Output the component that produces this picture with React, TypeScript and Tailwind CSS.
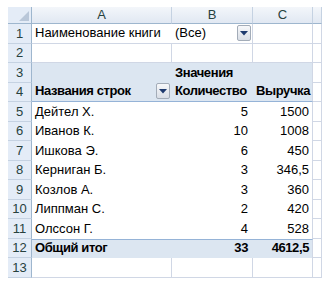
import React from "react";

const heights = [20, 19, 20, 19, 20, 19, 20, 19, 20, 19, 20, 19, 20];

const Drop = () => (
  <div className="w-[14px] h-[16px] rounded-[2px] border border-[#a3acb8] bg-gradient-to-b from-[#f7f8fa] to-[#d9dee6] flex items-center justify-center shrink-0">
    <svg width="8" height="5" viewBox="0 0 8 5">
      <path d="M0 0 H8 L4 4.5 Z" fill="#1e3a6e" />
    </svg>
  </div>
);

type Row = {
  a?: React.ReactNode;
  b?: React.ReactNode;
  c?: React.ReactNode;
  kind: "sheet" | "filter" | "head" | "data" | "total";
};

const rows: Row[] = [
  { kind: "filter" },
  { kind: "sheet" },
  { kind: "head" },
  { kind: "head" },
  { kind: "data", a: "Дейтел Х.", b: "5", c: "1500" },
  { kind: "data", a: "Иванов К.", b: "10", c: "1008" },
  { kind: "data", a: "Ишкова Э.", b: "6", c: "450" },
  { kind: "data", a: "Керниган Б.", b: "3", c: "346,5" },
  { kind: "data", a: "Козлов А.", b: "3", c: "360" },
  { kind: "data", a: "Липпман С.", b: "2", c: "420" },
  { kind: "data", a: "Олссон Г.", b: "4", c: "528" },
  { kind: "total", a: "Общий итог", b: "33", c: "4612,5" },
  { kind: "sheet" },
];

export default function App() {
  return (
    <div
      className="w-[330px] h-[292px] bg-white pl-[8px] pt-[7px] text-[13px] text-black overflow-hidden"
      style={{ fontFamily: '"Liberation Sans", Arial, sans-serif' }}
    >
      <div className="flex h-[17px]">
        <div className="w-[24px] h-full bg-[#e4ecf7] border-r border-b border-[#9eb6ce] relative">
          <svg className="absolute right-[2px] bottom-[2px]" width="10" height="10" viewBox="0 0 10 10">
            <path d="M10 0 V10 H0 Z" fill="#b9c7d9" />
          </svg>
        </div>
        <div className="w-[140px] h-full bg-gradient-to-b from-[#f3f6fa] to-[#e1e8f2] border-r border-r-[#c5d2e2] border-b border-b-[#9eb6ce] flex items-center justify-center text-[#27413e]">A</div>
        <div className="w-[81px] h-full bg-gradient-to-b from-[#f3f6fa] to-[#e1e8f2] border-r border-r-[#c5d2e2] border-b border-b-[#9eb6ce] flex items-center justify-center text-[#27413e]">B</div>
        <div className="w-[60px] h-full bg-gradient-to-b from-[#f3f6fa] to-[#e1e8f2] border-r border-r-[#c5d2e2] border-b border-b-[#9eb6ce] flex items-center justify-center text-[#27413e]">C</div>
        <div className="w-[9px] h-full bg-gradient-to-b from-[#f3f6fa] to-[#e1e8f2] border-r border-r-[#c5d2e2] border-b border-b-[#9eb6ce]" />
      </div>
      {rows.map((r, i) => {
        const h = heights[i];
        const n = i + 1;
        const blue = r.kind === "head" || r.kind === "total";
        const pivotNoGrid = r.kind === "head" || r.kind === "data" || r.kind === "total";
        const bottomBlue = n === 4;
        const topBlue = r.kind === "total";
        const boldRow = r.kind === "total" || n === 4;
        const cellBase = `h-full flex items-end pb-[1px] ${blue ? "bg-[#dce6f1]" : "bg-white"} ${boldRow ? "font-bold tracking-[-0.4px]" : ""}`;
        const bb = bottomBlue
          ? "border-b border-[#95b3d7]"
          : topBlue
          ? "border-t border-[#95b3d7]"
          : pivotNoGrid
          ? ""
          : "border-b border-[#d0d7e5]";
        return (
          <div key={i} className="flex" style={{ height: h }}>
            <div className="w-[24px] h-full bg-[#e4ecf7] border-r border-b border-r-[#9eb6ce] border-b-[#c5d2e2] flex items-center justify-center text-[#27413e]">
              {n}
            </div>
            <div className={`w-[140px] ${cellBase} ${bb} ${pivotNoGrid || r.kind === "filter" ? "" : "border-r border-r-[#d0d7e5]"} pl-[3px] pr-[2px] justify-between`}>
              {r.kind === "filter" ? (
                <span>Наименование книги</span>
              ) : n === 4 ? (
                <>
                  <span>Названия строк</span>
                  <div className="mb-[1px]"><Drop /></div>
                </>
              ) : (
                <span>{r.a}</span>
              )}
            </div>
            <div className={`w-[81px] ${cellBase} ${bb} ${pivotNoGrid ? "" : "border-r border-r-[#d0d7e5]"} ${r.kind === "data" || r.kind === "total" ? "justify-end pr-[5px]" : "pl-[3px] pr-[1px] justify-between"}`}>
              {r.kind === "filter" ? (
                <>
                  <span>(Все)</span>
                  <div className="mb-[1px]"><Drop /></div>
                </>
              ) : n === 3 ? (
                <span className="font-bold tracking-[-0.4px]">Значения</span>
              ) : n === 4 ? (
                <span>Количество</span>
              ) : (
                <span>{r.b}</span>
              )}
            </div>
            <div className={`w-[60px] ${cellBase} ${bb} border-r border-r-[#d0d7e5] ${r.kind === "data" || r.kind === "total" ? "justify-end pr-[3px]" : "pl-[3px]"}`}>
              {n === 4 ? <span>Выручка</span> : <span>{r.c}</span>}
            </div>
            <div className="w-[9px] h-full bg-white border-r border-b border-[#d0d7e5]" />
          </div>
        );
      })}
    </div>
  );
}
